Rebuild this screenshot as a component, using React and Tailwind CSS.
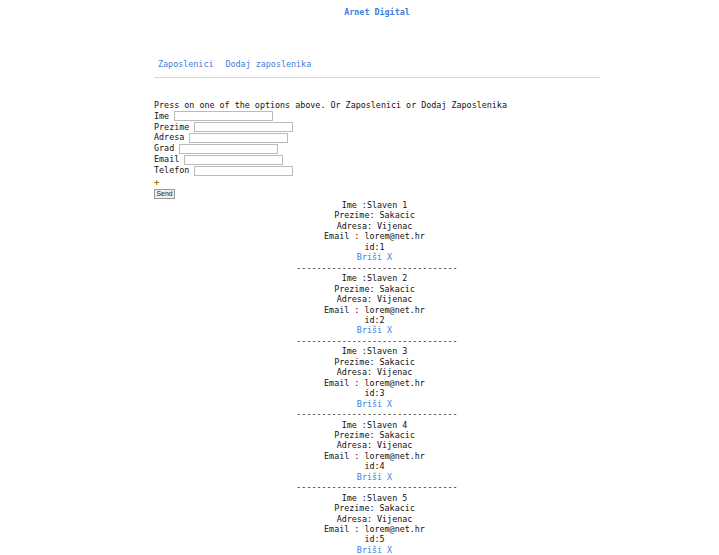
const employees = [1, 2, 3, 4, 5].map((id) => ({
  id,
  ime: `Slaven ${id}`,
  prezime: 'Sakacic',
  adresa: 'Vijenac',
  email: 'lorem@net.hr',
}));

const FIELDS = ['Ime', 'Prezime', 'Adresa', 'Grad', 'Email', 'Telefon'];

export default function App() {
  return (
    <div className="min-h-[555px] bg-white text-[#111] font-['DejaVu_Sans_Mono',monospace] text-[8.4px] leading-[10.45px]">
      <div className="ml-[154px] w-[446px]">
        <div className="pt-[7px] text-center font-bold text-[#3b7ddd]">
          Arnet Digital
        </div>

        <div className="mt-[42px] flex gap-[12px] pl-[4px] text-[#3b7ddd]">
          <a href="#">Zaposlenici</a>
          <a href="#">Dodaj zaposlenika</a>
        </div>
        <div className="mt-[7px] border-t border-[#d8d8d8]"></div>

        <div className="mt-[22px]">
          Press on one of the options above. Or Zaposlenici or Dodaj Zaposlenika
        </div>

        <form className="flex flex-col" onSubmit={(e) => e.preventDefault()}>
          {FIELDS.map((label) => (
            <div key={label} className="flex items-center h-[10.95px]">
              <span>{label}</span>
              <input
                className="ml-[5px] h-[10px] w-[99px] border border-[#bbb] bg-white"
                type="text"
              />
            </div>
          ))}
          <div className="h-[11px] text-[#a8700a] leading-[13px] font-bold text-[9px]">+</div>
          <div className="mt-[1px]">
            <button
              type="submit"
              className="h-[10px] w-[21px] border border-[#999] bg-[#eee] font-['Liberation_Sans',sans-serif] text-[6.8px] leading-[8px] text-[#222]"
            >
              Send
            </button>
          </div>
        </form>

        <div className="mt-[1px] flex flex-col items-center">
          {employees.map((e, i) => (
            <div key={e.id} className="flex flex-col items-center">
              <div className="flex flex-col items-center -ml-[5px]">
                <div>Ime :{e.ime}</div>
                <div>Prezime: {e.prezime}</div>
                <div>Adresa: {e.adresa}</div>
                <div>Email : {e.email}</div>
                <div>id:{e.id}</div>
                <a href="#" className="text-[#3b7ddd]">Briši X</a>
              </div>
              {i < employees.length - 1 && <div>--------------------------------</div>}
            </div>
          ))}
        </div>
      </div>
    </div>
  );
}
